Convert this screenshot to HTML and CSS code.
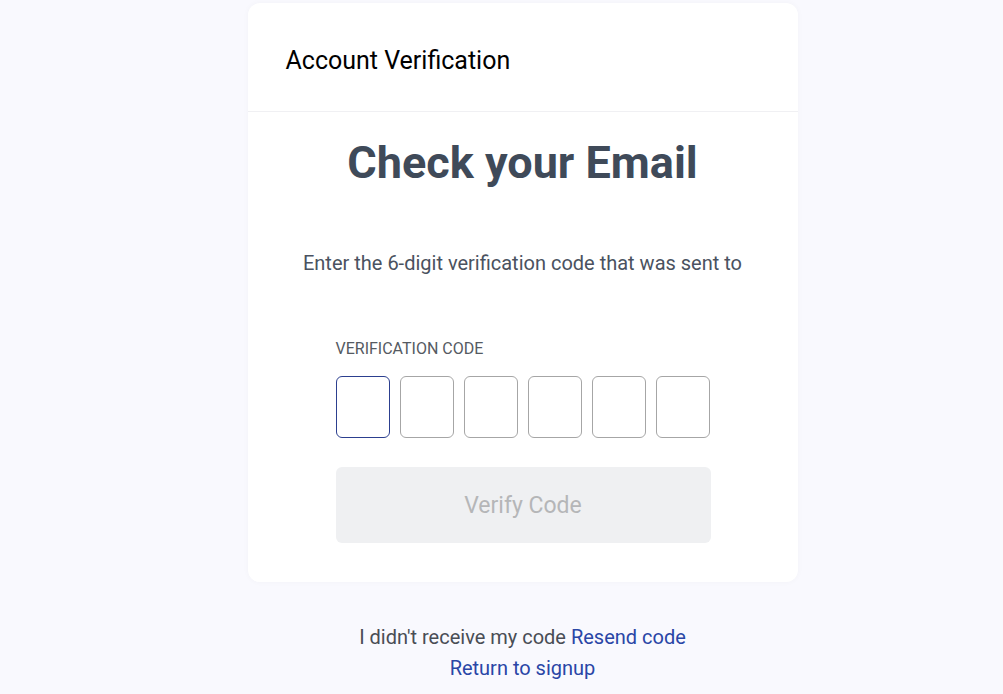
FILE: index.html
```html
<!DOCTYPE html>
<html>
<head>
<meta charset="utf-8">
<link rel="stylesheet" href="styles.css">
</head>
<body>
<main class="page">
  <section class="card">
    <header class="card-header">Account Verification</header>
    <div class="card-body">
      <h1 class="title">Check your Email</h1>
      <p class="desc">Enter the 6-digit verification code that was sent to</p>
      <div class="form">
        <label class="label">VERIFICATION CODE</label>
        <div class="codes">
          <input class="code focused" type="text" maxlength="1">
          <input class="code" type="text" maxlength="1">
          <input class="code" type="text" maxlength="1">
          <input class="code" type="text" maxlength="1">
          <input class="code" type="text" maxlength="1">
          <input class="code" type="text" maxlength="1">
        </div>
        <button class="verify" disabled>Verify Code</button>
      </div>
    </div>
  </section>
  <div class="footer">
    <p class="line">I didn't receive my code <a class="link" href="#">Resend code</a></p>
    <p class="line"><a class="link" href="#">Return to signup</a></p>
  </div>
</main>
</body>
</html>
```
FILE: styles.css
```css
* { box-sizing: border-box; }
html, body { margin: 0; padding: 0; }
body {
  background: #f9f9fe;
  font-family: Roboto, "Liberation Sans", sans-serif;
  height: 694px;
  overflow: hidden;
}
.page {
  display: flex;
  flex-direction: column;
  align-items: center;
  padding-left: 42px;
  padding-top: 3px;
}
.card {
  width: 550px;
  background: #fff;
  border-radius: 12px;
  box-shadow: 0 0 6px rgba(0,0,0,0.03);
}
.card-header {
  height: 109px;
  padding: 7px 38px 0;
  display: flex;
  align-items: center;
  font-size: 25px;
  color: #000;
  border-bottom: 1px solid #f0f0f3;
}
.card-body {
  display: flex;
  flex-direction: column;
  align-items: center;
  padding: 0 0 39px;
}
.title {
  margin: 25px 0 0;
  font-size: 45px;
  font-weight: 700;
  color: #3f4a59;
  line-height: 52px;
}
.desc {
  margin: 62px 0 0;
  font-size: 20px;
  color: #4a5260;
  line-height: 24px;
}
.form {
  width: 375px;
  margin: 64px 0 0 1px;
  display: flex;
  flex-direction: column;
}
.label {
  font-size: 16px;
  color: #555a62;
  line-height: 20px;
}
.codes {
  display: flex;
  gap: 10px;
  margin-top: 17px;
}
.code {
  width: 54px;
  height: 62px;
  border: 1px solid #a6a6a6;
  border-radius: 6px;
  background: #fff;
  outline: none;
  padding: 0;
}
.code.focused { border-color: #2c3f8f; }
.verify {
  margin-top: 29px;
  height: 76px;
  border: none;
  border-radius: 6px;
  background: #eff0f2;
  color: #b5b6b8;
  font-family: Roboto, "Liberation Sans", sans-serif;
  font-size: 23px;
}
.footer {
  margin-top: 40px;
  text-align: center;
}
.line {
  margin: 0;
  font-size: 20px;
  line-height: 31px;
  color: #494d55;
}
.link {
  color: #2a46a6;
  text-decoration: none;
}
```
